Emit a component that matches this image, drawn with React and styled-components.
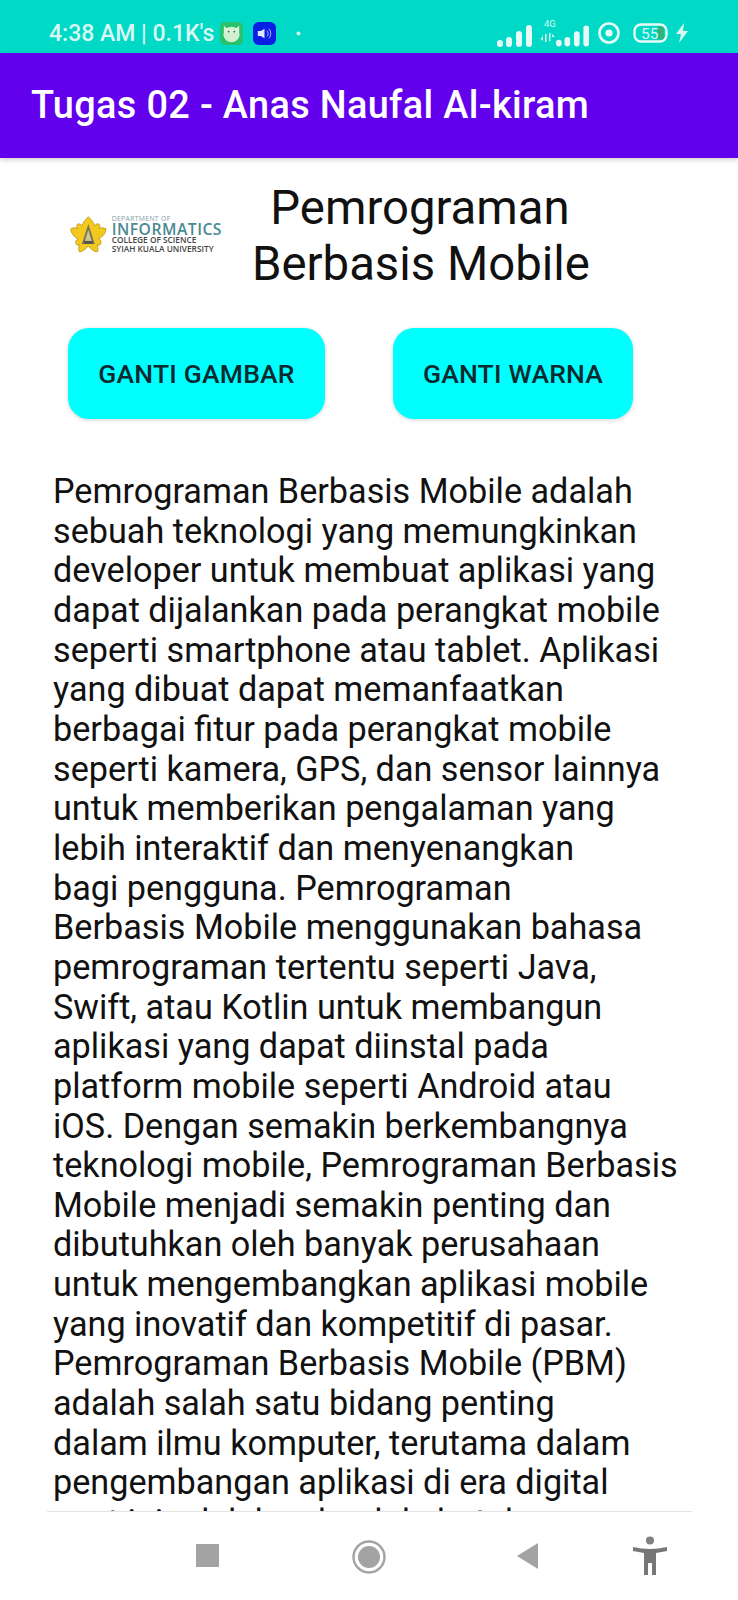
import React from "react";
import styled, { createGlobalStyle } from "styled-components";

const Global = createGlobalStyle`
  html, body { margin: 0; padding: 0; background: #fff; }
  body { font-family: Roboto, "Liberation Sans", sans-serif; }
`;

const Screen = styled.div`
  width: 738px; height: 1600px; display: flex; flex-direction: column;
  overflow: hidden; background: #fff;
`;
const StatusBar = styled.div`
  height: 53px; flex: none; background: #00d9c5; display: flex; align-items: center;
  padding: 13px 0 0 49px; box-sizing: border-box; color: #d8f8f4;
`;
const StatusTime = styled.span`
  font-size: 23px; font-weight: 500; line-height: 1; white-space: nowrap;
`;
const StatusLeftIcons = styled.div`
  display: flex; align-items: center; margin-left: 6px; gap: 10px;
`;
const StatusRight = styled.div`
  margin-left: auto; margin-right: 49px; display: flex; align-items: center;
`;
const Toolbar = styled.header`
  height: 105px; flex: none; background: #6200ee; display: flex; align-items: center;
  padding-left: 31px; box-shadow: 0 2px 5px rgba(0,0,0,.18); position: relative; z-index: 1;
`;
const ToolbarTitle = styled.h1`
  margin: 0; color: #fff; font-size: 37.9px; font-weight: 500; line-height: 1; letter-spacing: .33px;
`;
const Content = styled.main`
  flex: 1; min-height: 0; overflow: hidden; display: flex; flex-direction: column;
`;
const HeaderRow = styled.div`
  display: flex; align-items: flex-start; padding: 22px 0 0 70px; height: 148px; flex: none;
  box-sizing: border-box;
`;
const LogoWrap = styled.div`
  width: 152px; flex: none; margin-top: 35px; display: flex; align-items: center; gap: 5px;
`;
const LogoText = styled.div`
  display: flex; flex-direction: column; font-family: "Open Sans", sans-serif; white-space: nowrap;
`;
const LogoSmall = styled.span`
  font-size: 6.8px; line-height: 8px; color: #7f9ea3; letter-spacing: .35px;
`;
const LogoBig = styled.span`
  font-size: 15.7px; line-height: 13px; color: #4a8a92; font-weight: 600; letter-spacing: .5px;
`;
const LogoDark = styled.span`
  font-size: 8.3px; line-height: 8.5px; color: #444; font-weight: 600;
`;
const Heading = styled.h2`
  margin: 0 0 0 30px; width: 336px; text-align: center; font-size: 47.3px; line-height: 56px;
  font-weight: 400; color: #111; white-space: nowrap;
`;
const ButtonRow = styled.div`
  display: flex; padding: 0 0 0 68px; margin-top: 22px; gap: 68px; flex: none;
`;
const ActionButton = styled.button`
  width: ${p => p.$w}px; height: 91px; border: 0; border-radius: 21px; background: #00ffff;
  color: #0b2a30; font-family: Roboto, sans-serif; font-size: 26.5px; font-weight: 500;
  letter-spacing: .2px; padding: 0; box-shadow: 0 1px 4px rgba(0,0,0,.18);
`;
const Paragraph = styled.div`
  margin-top: 53px; padding-left: 53px; font-size: 34.2px; line-height: 39.65px; color: #111;
`;
const Line = styled.div`
  white-space: nowrap;
`;
const NavBar = styled.nav`
  height: 89px; flex: none; background: #fff; display: flex; position: relative;
`;
const NavRule = styled.div`
  position: absolute; top: 0; left: 47px; right: 46px; height: 1px; background: #e4e4e4;
`;
const NavIcon = styled.svg`
  position: absolute; top: ${p => p.$y}px; left: ${p => p.$x}px;
`;

const lines = [
  "Pemrograman Berbasis Mobile adalah",
  "sebuah teknologi yang memungkinkan",
  "developer untuk membuat aplikasi yang",
  "dapat dijalankan pada perangkat mobile",
  "seperti smartphone atau tablet. Aplikasi",
  "yang dibuat dapat memanfaatkan",
  "berbagai fitur pada perangkat mobile",
  "seperti kamera, GPS, dan sensor lainnya",
  "untuk memberikan pengalaman yang",
  "lebih interaktif dan menyenangkan",
  "bagi pengguna. Pemrograman",
  "Berbasis Mobile menggunakan bahasa",
  "pemrograman tertentu seperti Java,",
  "Swift, atau Kotlin untuk membangun",
  "aplikasi yang dapat diinstal pada",
  "platform mobile seperti Android atau",
  "iOS. Dengan semakin berkembangnya",
  "teknologi mobile, Pemrograman Berbasis",
  "Mobile menjadi semakin penting dan",
  "dibutuhkan oleh banyak perusahaan",
  "untuk mengembangkan aplikasi mobile",
  "yang inovatif dan kompetitif di pasar.",
  "Pemrograman Berbasis Mobile (PBM)",
  "adalah salah satu bidang penting",
  "dalam ilmu komputer, terutama dalam",
  "pengembangan aplikasi di era digital",
  "saat ini adalah sebuah kebutuhan",
];

const Bars = ({ w = 36 }) => (
  <svg width={w} height="24" viewBox="0 0 36 24" fill="#e6fbf8" style={{ marginTop: 5 }}>
    <rect x="0" y="16" width="6" height="7" rx="3" />
    <rect x="9" y="13" width="6" height="10" rx="3" />
    <rect x="19" y="7" width="6" height="16" rx="3" />
    <rect x="29" y="1" width="6" height="22" rx="3" />
  </svg>
);

const Flower = () => (
  <svg width="37" height="37" viewBox="0 0 37 37">
    <path
      d="M18.5 .5 C21 3 24 6 25 10 C26 7.5 29 7 30 9 C30.5 10.5 30 11.5 29.5 12.5 C32 11.5 35 11.5 36.5 13 C36 17 33 21 29 23 C31 24 32 26 31 28 C30 29.5 28.5 29.5 27.5 29 C28.5 31.5 28.5 34 27.5 36 C24 36 21 33 18.5 30 C16 33 13 36 9.5 36 C8.5 34 8.5 31.5 9.5 29 C8.5 29.5 7 29.5 6 28 C5 26 6 24 8 23 C4 21 1 17 .5 13 C2 11.5 5 11.5 7.5 12.5 C7 11.5 6.5 10.5 7 9 C8 7 11 7.5 12 10 C13 6 16 3 18.5 .5 Z"
      fill="#f3c91d" stroke="#b8951c" strokeWidth=".8" strokeLinejoin="round"
    />
    <path d="M18.5 8 L25 28 H12 Z" fill="#77775f" />
    <path d="M18.5 14 L22 25 H15 Z" fill="#cfc690" />
    <path d="M14 25 H23 V28 H14 Z" fill="#55554a" />
  </svg>
);

export default function App() {
  return (
    <Screen>
      <Global />
      <StatusBar>
        <StatusTime>4:38 AM | 0.1K's</StatusTime>
        <StatusLeftIcons>
          <svg width="23" height="23" viewBox="0 0 24 24">
            <rect width="24" height="24" rx="5" fill="#27c26a" />
            <ellipse cx="12" cy="13" rx="8.5" ry="8" fill="#cfeFd0" />
            <path d="M4 4 L8 7 H16 L20 4 L20 11 H4 Z" fill="#dff3da" />
            <circle cx="9" cy="10" r="1" fill="#26734a" /><circle cx="15" cy="10" r="1" fill="#26734a" />
          </svg>
          <svg width="23" height="23" viewBox="0 0 24 24" fill="none">
            <rect width="24" height="24" rx="6" fill="#0a1ee6" />
            <path d="M5 9.5 H8 L12 7 V17 L8 14.5 H5 Z" fill="#dfe6ff" />
            <path d="M14.5 9 A4 4 0 0 1 14.5 15 M16.5 7 A7 7 0 0 1 16.5 17" stroke="#aebcff" strokeWidth="1" />
          </svg>
          <svg width="5" height="5" style={{ marginLeft: 10 }} viewBox="0 0 5 5"><circle cx="2.5" cy="2.5" r="2" fill="#d8f8f4" /></svg>
        </StatusLeftIcons>
        <StatusRight>
          <Bars />
          <svg width="16" height="30" viewBox="0 0 16 30" style={{ marginLeft: 7, marginTop: -1 }} fill="#d8f8f4">
            <text x="4" y="9" fontSize="9.5" fontFamily="Roboto">4G</text>
            <path d="M3 16 V23 L0 20 H2 Z M5 16 H6.5 V24 H5 Z M9 15 H10.5 V23 H9 Z M12 16 L15 19 H12 Z" />
          </svg>
          <Bars w={34} />
          <svg width="24" height="24" viewBox="0 0 24 24" fill="none" style={{ marginLeft: 7 }}>
            <circle cx="12" cy="12" r="9.5" stroke="#e6fbf8" strokeWidth="2.6" />
            <circle cx="12" cy="12" r="3.6" fill="#e6fbf8" />
          </svg>
          <svg width="36" height="24" viewBox="0 0 36 24" style={{ marginLeft: 12 }} fill="none">
            <rect x="1.5" y="3.5" width="32" height="17" rx="6.5" stroke="#e6fbf8" strokeWidth="2.4" />
            <rect x="24" y="5.5" width="7" height="13" rx="2" fill="#2fb37a" />
            <text x="8" y="18" fontSize="15.5" fontFamily="Roboto" fill="#d8f8f4">55</text>
          </svg>
          <svg width="14" height="20" viewBox="0 0 14 20" style={{ marginLeft: 6 }}>
            <path d="M9 0 L1 11 H6 L4 20 L13 8 H8 Z" fill="#d8f8f4" />
          </svg>
        </StatusRight>
      </StatusBar>
      <Toolbar><ToolbarTitle>Tugas 02 - Anas Naufal Al-kiram</ToolbarTitle></Toolbar>
      <Content>
        <HeaderRow>
          <LogoWrap>
            <Flower />
            <LogoText>
              <LogoSmall>DEPARTMENT OF</LogoSmall>
              <LogoBig>INFORMATICS</LogoBig>
              <LogoDark>COLLEGE OF SCIENCE</LogoDark>
              <LogoDark>SYIAH KUALA UNIVERSITY</LogoDark>
            </LogoText>
          </LogoWrap>
          <Heading>Pemrograman<br />Berbasis Mobile</Heading>
        </HeaderRow>
        <ButtonRow>
          <ActionButton $w={257}>GANTI GAMBAR</ActionButton>
          <ActionButton $w={240}>GANTI WARNA</ActionButton>
        </ButtonRow>
        <Paragraph>{lines.map(l => <Line key={l}>{l}</Line>)}</Paragraph>
      </Content>
      <NavBar>
        <NavRule />
        <NavIcon $x={196} $y={33} width="23" height="23" viewBox="0 0 23 23"><rect width="23" height="23" fill="#a3a3a3" /></NavIcon>
        <NavIcon $x={352} $y={29} width="34" height="34" viewBox="0 0 34 34" fill="none">
          <circle cx="17" cy="17" r="15.5" stroke="#a3a3a3" strokeWidth="2.4" />
          <circle cx="17" cy="17" r="11" fill="#a3a3a3" />
        </NavIcon>
        <NavIcon $x={516} $y={32} width="23" height="26" viewBox="0 0 23 26"><path d="M22 0 V26 L1 13 Z" fill="#a3a3a3" /></NavIcon>
        <NavIcon $x={632} $y={25} width="36" height="40" viewBox="0 0 36 40">
          <circle cx="18" cy="4.5" r="4" fill="#808080" />
          <path d="M1 11 Q18 15 35 11 V15 L24 17 V39 H20 V27 H16 V39 H12 V17 L1 15 Z" fill="#777" />
        </NavIcon>
      </NavBar>
    </Screen>
  );
}
